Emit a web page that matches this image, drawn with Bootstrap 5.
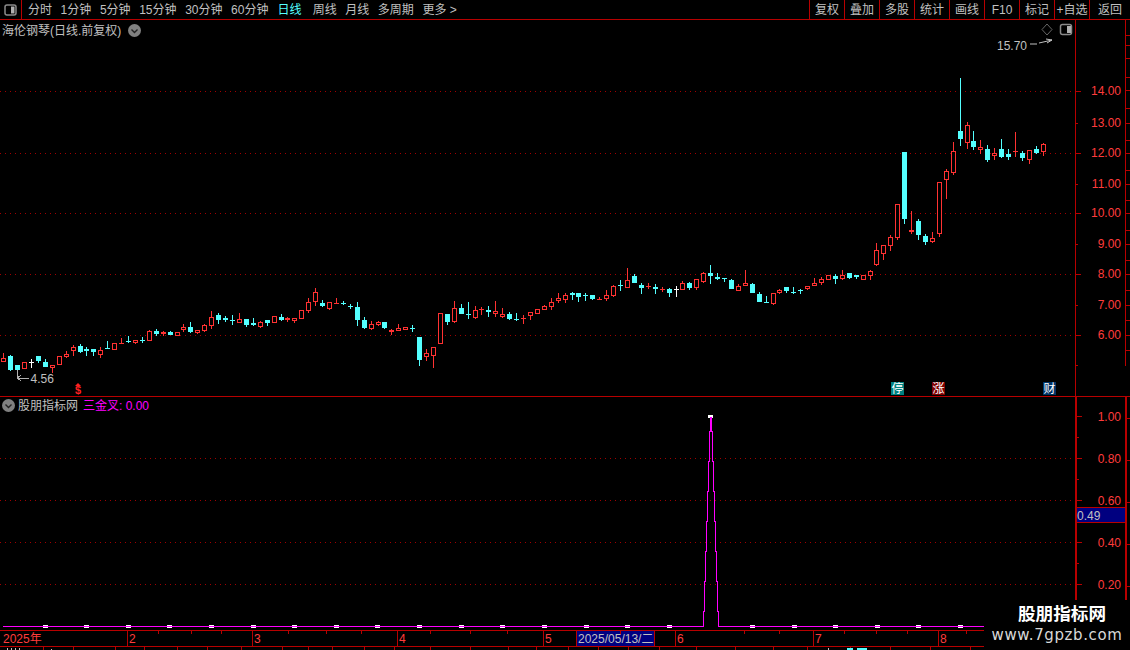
<!DOCTYPE html>
<html lang="zh">
<head>
<meta charset="utf-8">
<title>海伦钢琴</title>
<link href="https://cdn.jsdelivr.net/npm/bootstrap@5.3.0/dist/css/bootstrap.min.css" rel="stylesheet">
<style>
html,body{margin:0;background:#000;overflow:hidden}
.term{width:1130px;height:650px;background:#000;color:#c0c0c0;font:12px/1 "Liberation Sans","Noto Sans CJK SC",sans-serif;overflow:hidden}
.bar-top{height:20px;border-bottom:1px solid #b80000}
.tool-icon{width:22px;height:19px;border-right:1px solid #b80000}
.tool-list{margin-left:6px;gap:8.6px}
.tool-on{color:#54ffff;margin-left:.5px;margin-right:2.5px}
.tool-btn{width:35px;height:19px;border-left:1px solid #b80000;white-space:nowrap}
.tool-btn.wide{width:41px}
.pane-a{height:377px}
.pane-b{height:233px}
.pane-c{height:20px}
.pane-a svg,.pane-b svg,.pane-c svg{display:block}
svg text{font:12px "Liberation Sans","Noto Sans CJK SC",sans-serif}
svg text.dollar{font:700 11px "Liberation Sans",sans-serif}
.pane-head{left:2px;top:4px;gap:7px;white-space:nowrap}
.pane-head.low{left:2px;top:2px;gap:3px}
.magenta{color:#ff00ff;margin-left:2px}
.stamp{left:984px;top:600px;width:146px;height:50px;background:#000;color:#fff}
.stamp-cn{font-size:17.6px;line-height:20px;margin-top:4px;padding-left:10px;font-weight:700}
.stamp-en{font-size:15px;line-height:18px;margin-top:2px;letter-spacing:.6px;color:#d8d8d8;font-family:"DejaVu Sans","Liberation Sans",sans-serif}
</style>
</head>
<body>
<div class="term d-flex flex-column position-relative">
  <nav class="bar-top d-flex align-items-center">
    <div class="tool-icon d-flex align-items-center justify-content-center">
      <svg width="13" height="12" viewBox="0 0 13 12"><rect x="1" y="1" width="11" height="10" rx="2" fill="#000" stroke="#8a8a8a" stroke-width="1.5"/><rect x="7" y="2.5" width="3.5" height="7" fill="#b0b0b0"/></svg>
    </div>
    <div class="tool-list d-flex align-items-center">
      <span>分时</span><span>1分钟</span><span>5分钟</span><span>15分钟</span><span>30分钟</span><span>60分钟</span><span class="tool-on">日线</span><span>周线</span><span>月线</span><span>多周期</span><span>更多 &gt;</span>
    </div>
    <div class="ms-auto d-flex align-items-center">
      <span class="tool-btn d-flex align-items-center justify-content-center">复权</span>
      <span class="tool-btn d-flex align-items-center justify-content-center">叠加</span>
      <span class="tool-btn d-flex align-items-center justify-content-center">多股</span>
      <span class="tool-btn d-flex align-items-center justify-content-center">统计</span>
      <span class="tool-btn d-flex align-items-center justify-content-center">画线</span>
      <span class="tool-btn d-flex align-items-center justify-content-center">F10</span>
      <span class="tool-btn d-flex align-items-center justify-content-center">标记</span>
      <span class="tool-btn d-flex align-items-center justify-content-center">+自选</span>
      <span class="tool-btn wide d-flex align-items-center justify-content-center">返回</span>
    </div>
  </nav>

  <section class="pane-a position-relative">
    <svg id="upper" width="1130" height="377" viewBox="0 20 1130 377" shape-rendering="crispEdges">
      <g id="upperGrid"></g>
      <g id="candles"></g>
      <g fill="#ff3c3c" text-anchor="end">
        <text x="1121" y="95">14.00</text><text x="1121" y="127">13.00</text><text x="1121" y="157">12.00</text><text x="1121" y="188">11.00</text><text x="1121" y="217">10.00</text><text x="1121" y="248">9.00</text><text x="1121" y="278">8.00</text><text x="1121" y="309">7.00</text><text x="1121" y="339">6.00</text>
      </g>
      <text x="997" y="50" fill="#c0c0c0">15.70</text>
      <path d="M1030 44H1037M1039 43L1052 40M1046 39L1052 40L1047 43" fill="none" stroke="#c0c0c0" shape-rendering="auto"/>
      <path d="M1047 24L1052 29.500L1047 35L1042 29.500Z" fill="none" stroke="#666" shape-rendering="auto"/>
      <rect x="1060.500" y="24.500" width="11" height="10" rx="2" fill="#000" stroke="#8a8a8a" stroke-width="1.500" shape-rendering="auto"/>
      <rect x="1067" y="26" width="3.500" height="7" fill="#b0b0b0"/>
      <text x="30.500" y="383" fill="#c0c0c0">4.56</text>
      <path d="M17.500 370V378H29M21 375L17.500 378L21 381" fill="none" stroke="#b0b0b0"/>
      <path d="M78 383L81 386H75Z" fill="#ff2020" shape-rendering="auto"/>
      <text class="dollar" x="78" y="394" fill="#ff2020" text-anchor="middle">$</text>
      <rect x="891" y="382" width="13" height="13" fill="#008080"/>
      <text x="897.500" y="393" fill="#fff" text-anchor="middle">停</text>
      <rect x="932" y="382" width="13" height="13" fill="#800000"/>
      <text x="938.500" y="393" fill="#fff" text-anchor="middle">涨</text>
      <rect x="1043" y="382" width="13" height="13" fill="#003366"/>
      <text x="1049.500" y="393" fill="#fff" text-anchor="middle">财</text>
      <rect x="0" y="396" width="1130" height="1" fill="#b80000"/>
    </svg>
    <div class="pane-head position-absolute d-flex align-items-center">
      <span>海伦钢琴(日线.前复权)</span>
      <svg width="13" height="13" viewBox="0 0 13 13"><circle cx="6.500" cy="6.500" r="6.500" fill="#808080"/><path d="M3.500 5.500L6.500 8.500L9.500 5.500" fill="none" stroke="#222" stroke-width="1.400"/></svg>
    </div>
  </section>

  <section class="pane-b position-relative">
    <svg id="lower" width="1130" height="233" viewBox="0 397 1130 233" shape-rendering="crispEdges">
      <g id="lowerGrid"></g>
      <g fill="#ff3c3c" text-anchor="end">
        <text x="1121" y="421">1.00</text><text x="1121" y="463">0.80</text><text x="1121" y="505">0.60</text><text x="1121" y="547">0.40</text><text x="1121" y="589">0.20</text>
      </g>
      <rect x="1077" y="507" width="48" height="16" fill="#000080"/>
      <path d="M1077 507.500H1125M1077 522.500H1125" stroke="#b80000"/>
      <text x="1077" y="520" fill="#c0c0c0">0.49</text>
      <g id="markers" fill="#fff"></g>
      <path d="M3 626.500H703.500V611.500H704.500V581.500H705.500V551.500H706.500V521.500H707.500V491.500H708.500V461.500H709.500V431.500H710.500V416.500M711.500 416.500V431.500H712.500V461.500H713.500V491.500H714.500V521.500H715.500V551.500H716.500V581.500H717.500V611.500H718.500V626.500H984" fill="none" stroke="#ff00ff"/>
    </svg>
    <div class="pane-head low position-absolute d-flex align-items-center">
      <svg width="13" height="13" viewBox="0 0 13 13"><circle cx="6.500" cy="6.500" r="6.500" fill="#808080"/><path d="M3.500 5.500L6.500 8.500L9.500 5.500" fill="none" stroke="#222" stroke-width="1.400"/></svg>
      <span>股朋指标网</span>
      <span class="magenta">三金叉: 0.00</span>
    </div>
  </section>

  <section class="pane-c">
    <svg id="axis" width="1130" height="20" viewBox="0 630 1130 20" shape-rendering="crispEdges">
      <path d="M0 630.500H984M0 646.500H984" stroke="#b80000"/>
      <rect x="576" y="631" width="78" height="15" fill="#000080"/>
      <g id="axisTicks"></g>
      <g fill="#ff3c3c">
        <text x="3" y="643">2025年</text><text x="129" y="643">2</text><text x="254" y="643">3</text><text x="399" y="643">4</text><text x="545" y="643">5</text><text x="677" y="643">6</text><text x="815" y="643">7</text><text x="940" y="643">8</text>
      </g>
      <text x="578" y="643" fill="#c0c0c0">2025/05/13/二</text>
      <path d="M7 648v2M11 648v2M15 648v2M19 648v2M51 649v1" stroke="#c0c0c0"/>
      <rect x="847" y="648" width="6" height="2" fill="#54ffff"/>
      <rect x="857" y="648" width="10" height="2" fill="#54ffff"/>
      <rect x="828" y="648" width="1" height="2" fill="#c0c0c0"/>
    </svg>
  </section>

  <aside class="stamp position-absolute text-center">
    <div class="stamp-cn">股朋指标网</div>
    <div class="stamp-en">www.7gpzb.com</div>
  </aside>
</div>

<script>
var NS='http://www.w3.org/2000/svg';
function el(parent,tag,attrs){var e=document.createElementNS(NS,tag);for(var k in attrs)e.setAttribute(k,attrs[k]);parent.appendChild(e);return e}
var RED='#ff3232',CY='#54ffff',WH='#ffffff',LINE='#b80000',DOT='#a00000';
/* type, wick top, body top, body bottom, wick bottom: zoom units (3 per px) from an origin row */
var A="r 218 234 245 245|c 225 228 270 273|c 255 255 270 290|r 247 247 266 266|w 237 246 249 264|c 228 228 243 249|c 237 246 261 261|r 256 256 263 278|r 229 229 254 254|r 214 223 231 234|r 195 202 213 228|c 192 198 216 218|c 201 207 212 228|c 208 208 216 228|r 201 211 224 234|c 183 204 207 207|r 190 190 209 209|r 174 190 193 193|c 168 183 186 189|r 181 181 188 192|c 171 180 183 189|r 150 154 182 182|c 147 153 162 168|r 153 157 163 168|c 153 156 164 164|r 157 157 167 167|r 132 142 149 155|c 126 141 156 159|r 151 151 158 162|r 133 136 152 155|r 93 112 139 147|c 99 105 120 132|c 108 113 119 126|c 105 119 122 135|r 99 118 128 130|c 118 118 135 141|c 114 130 134 138|r 123 126 140 144|c 121 121 129 138|r 109 109 129 129|c 102 111 120 123|r 111 115 121 126|r 115 115 124 129|r 91 91 118 118|r 54 67 94 99|r 24 37 67 78|c 60 70 78 81|r 67 67 86 90|r 54 68 71 72|c 63 69 72 75|c 72 78 81 87|c 66 81 120 138|c 111 120 144 147|r 123 132 147 150|r 124 127 136 139";
var B="c 216 216 234 237|r 237 240 245 255|r 222 235 242 242|r 232 232 239 239|c 225 235 238 246|c 261 261 330 348|r 297 310 320 333|r 292 292 317 354|r 190 190 281 281|c 192 192 216 225|r 153 175 216 219|c 162 174 192 192|c 156 192 195 207|r 168 181 204 207|r 171 177 181 195|c 168 181 185 201|r 153 184 191 201|r 174 193 200 204|c 186 192 207 210|c 189 207 210 213|r 195 204 208 222|r 187 187 197 210|r 178 178 191 191|r 165 168 179 179|r 144 157 170 180|r 129 145 152 159|r 129 136 149 159|c 126 130 136 150|c 129 129 141 156|c 129 135 138 153|c 135 135 147 150|r 142 147 151 151|r 120 136 147 153|r 105 108 137 141|c 90 105 108 123|r 54 91 113 113|c 72 78 99 99|c 99 105 114 132|r 99 107 110 117|c 102 111 117 132|r 111 117 120 126|c 114 117 129 141|w 108 117 120 141|r 94 100 120 120|c 96 99 114 120|r 88 88 114 120|r 66 70 95 98|c 45 69 78 102|c 69 81 87 90|c 84 84 86 96|c 87 90 117 117|r 102 109 122 122|r 60 99 107 107|c 99 102 129 129|c 126 132 156 156";
var C="c 78 95 98 99|r 69 69 102 105|r 57 60 69 72|c 51 51 63 69|c 51 66 69 72|c 57 60 63 72";
var D="r 649 649 656 660|r 624 640 647 648|r 621 628 638 645|r 616 616 631 631|c 612 618 626 642|r 600 616 626 629|c 610 610 624 626|c 615 615 620 627|r 616 616 629 629|r 600 604 617 630|r 519 541 584 587|r 526 526 551 570|r 495 502 527 543|r 403 403 503 510|c 246 246 447 462|r 423 480 486 492|c 447 453 495 510|c 492 498 516 525|r 486 505 515 519|r 337 337 491 501|r 298 304 329 387|r 216 244 308 315|c 24 183 207 228|r 156 166 218 237|c 183 213 231 240|r 210 232 239 252|c 225 237 270 276|r 234 250 257 270|c 207 237 261 264|c 237 252 261 270|r 186 243 247 261|c 243 249 264 273|r 241 241 269 282|c 228 237 249 252|r 220 223 246 258";
var g=document.getElementById('candles'),idx=0;
[[A,280],[B,250],[C,270],[D,70]].forEach(function(set){
  set[0].split('|').forEach(function(s){
    var p=s.split(' '),cx=Math.round(3.3+6.93*idx),o=set[1];idx++;
    var wt=Math.round(o+p[1]/3),bt=Math.round(o+p[2]/3),bb=Math.round(o+p[3]/3),wb=Math.round(o+p[4]/3);
    var col=p[0]=='r'?RED:(p[0]=='c'?CY:WH);
    if(wt<bt)el(g,'rect',{x:cx,y:wt,width:1,height:bt-wt,fill:col});
    if(wb>bb)el(g,'rect',{x:cx,y:bb,width:1,height:wb-bb,fill:col});
    var h=Math.max(bb-bt,1);
    if(p[0]=='r'&&h>2){el(g,'rect',{x:cx-2+.5,y:bt+.5,width:4,height:h-1,fill:'#000',stroke:col});}
    else{el(g,'rect',{x:cx-2,y:bt,width:5,height:h,fill:col});}
  });
});
function hdots(p,y,x2){el(p,'path',{d:'M0 '+(y+.5)+'H'+x2,stroke:DOT,'stroke-dasharray':'1 4',fill:'none'})}
function r(p,x,y,w,h,c){el(p,'rect',{x:x,y:y,width:w,height:h,fill:c||LINE})}
var ug=document.getElementById('upperGrid');
[91,153,213,274,335].forEach(function(y){hdots(ug,y,1075)});
r(ug,1075,20,1,376);r(ug,1125,20,1,346);
[91,153,213,274,335].forEach(function(y){r(ug,1076,y,5,1)});
[123,184,244,305,365].forEach(function(y){r(ug,1076,y,2,1)});
[35,45,58,77,90,108,123,140,153,170,184,200,213,230,244,260,274,290,305,320,335,350].forEach(function(y){r(ug,1126,y,4,1)});
var lg=document.getElementById('lowerGrid');
[458,500,542,584].forEach(function(y){hdots(lg,y,1075)});
r(lg,1075,397,2,203);r(lg,1125,397,2,203);
[416,458,500,542,584].forEach(function(y){r(lg,1077,y,5,1)});
[437,479,521,563].forEach(function(y){r(lg,1077,y,2,1)});
[418,460,502,544,586].forEach(function(y){r(lg,1127,y,3,1)});
var m=document.getElementById('markers');
[45,86,128,169,211,253,294,336,377,419,461,502,544,586,627,669,752,794,835,877,918,960].forEach(function(x){r(m,x-2,625,5,3,'#fff')});
r(m,708,415,5,3,'#fff');
var t=document.getElementById('axisTicks');
[127,252,397,543,576,654,675,813,938].forEach(function(x){r(t,x,631,1,15)});
[158,191,221,288,326,361,430,470,507,620,744,779,844,876,907,966].forEach(function(x){r(t,x,631,1,3)});
[43,73,115,144,177,207,241,282,308,332,364,394,430,470,508,536,568,598,628,659,696,735,773,807,850,890,930,970].forEach(function(x){r(t,x,647,1,3)});
</script>
<script src="https://cdn.jsdelivr.net/npm/bootstrap@5.3.0/dist/js/bootstrap.bundle.min.js"></script>
</body>
</html>
